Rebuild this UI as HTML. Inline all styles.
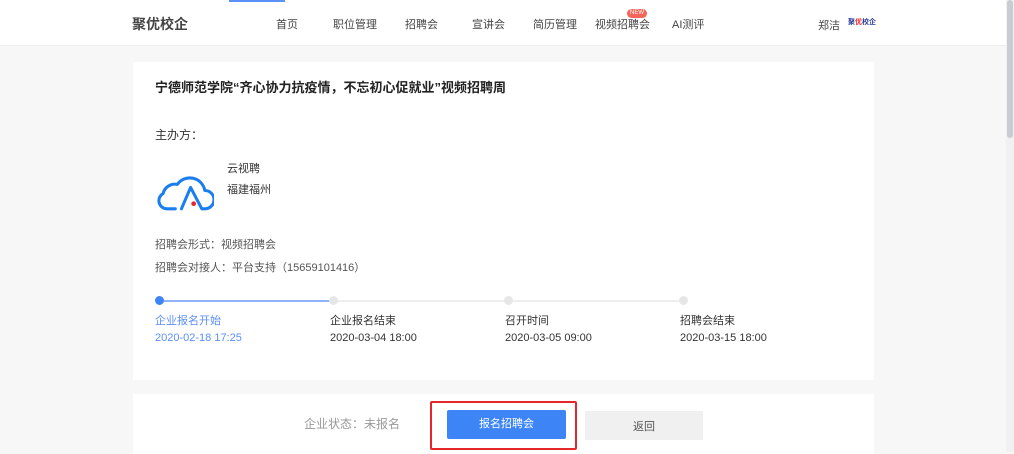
<!DOCTYPE html>
<html><head><meta charset="utf-8">
<style>
*{margin:0;padding:0;box-sizing:border-box}
body{width:1014px;height:452px;overflow:hidden;background:#f7f7f7;font-family:"Liberation Sans","Noto Sans CJK SC",sans-serif;position:relative;color:#333}
.hdr{position:absolute;left:0;top:0;width:1006px;height:46px;background:#fff;border-bottom:1px solid #eee}
.logo{position:absolute;left:132px;top:14px;font-size:14px;color:#444;font-weight:bold}
.nav{position:absolute;top:16px;font-size:11px;color:#444}
.bar{position:absolute;left:229px;top:0;width:56px;height:2px;background:#5b8ff9}
.new{position:absolute;left:627px;top:9px;background:#f4655a;color:#fff;font-size:6px;border-radius:5px;padding:0 3px;line-height:9px}
.sb{position:absolute;left:1006px;top:0;width:8px;height:452px;background:#f1f1f1}
.sb i{position:absolute;left:1px;top:0;width:6px;height:138px;background:#c9ccd3;border-radius:3px}
.card{position:absolute;left:133px;top:62px;width:741px;height:318px;background:#fff}
.card2{position:absolute;left:133px;top:394px;width:741px;height:60px;background:#fff}
.t{position:absolute;font-size:11px;color:#333;white-space:nowrap;line-height:14px}
.g{color:#555}
.btn{position:absolute;left:447px;top:410px;width:119px;height:29px;background:#3d84f7;border-radius:2px;color:#fff;font-size:11px;text-align:center;line-height:29px}
.btn2{position:absolute;left:585px;top:411px;width:118px;height:29px;background:#f0f0f0;color:#555;font-size:11px;text-align:center;line-height:32px}
.red{position:absolute;left:430px;top:401px;width:147px;height:49px;border:2px solid #e6262b;border-radius:2px}
.line{position:absolute;top:300px;height:2px}
.dot{position:absolute;top:296px;width:9px;height:9px;border-radius:50%;background:#e6e6e6}
</style></head><body>
<div class="hdr">
<div class="bar"></div>
<div class="logo">聚优校企</div>
<div class="nav" style="left:276px">首页</div>
<div class="nav" style="left:333px">职位管理</div>
<div class="nav" style="left:405px">招聘会</div>
<div class="nav" style="left:472px">宣讲会</div>
<div class="nav" style="left:533px">简历管理</div>
<div class="nav" style="left:595px">视频招聘会</div>
<div class="new">NEW</div>
<div class="nav" style="left:672px">AI测评</div>
<div class="nav" style="left:818px;top:17px">郑洁</div>
<div style="position:absolute;left:848px;top:17px;font-size:7px;font-weight:bold;color:#2a3b9a">聚<span style="color:#e22">优</span>校企</div>
</div>
<div class="sb"><i></i></div>
<div class="card"></div>
<div class="t" style="left:155px;top:80px;font-size:13px;font-weight:bold;color:#222;line-height:16px">宁德师范学院“齐心协力抗疫情，不忘初心促就业”视频招聘周</div>
<div class="t" style="left:155px;top:128px;font-size:12px">主办方：</div>
<svg style="position:absolute;left:157px;top:170px" width="57" height="43" viewBox="0 0 56 42">
<path d="M18 38 H10 A8 8 0 0 1 6 23 A12 12 0 0 1 20 14 A15 15 0 0 1 47 20 A9 9 0 0 1 47 38 L44 38 L33 17 L24 38" fill="none" stroke="#1a7ef0" stroke-width="3" stroke-linejoin="round" stroke-linecap="round"/>
<circle cx="36" cy="33" r="2.3" fill="#e6262b"/>
</svg>
<div class="t" style="left:227px;top:162px">云视聘</div>
<div class="t" style="left:227px;top:183px">福建福州</div>
<div class="t g" style="left:155px;top:238px">招聘会形式：视频招聘会</div>
<div class="t g" style="left:155px;top:261px">招聘会对接人：平台支持（15659101416）</div>
<div class="line" style="left:159px;width:175px;background:#8fb4fb"></div>
<div class="line" style="left:334px;width:350px;background:#eee"></div>
<div class="dot" style="left:155px;background:#3d84f7"></div>
<div class="dot" style="left:329px"></div>
<div class="dot" style="left:504px"></div>
<div class="dot" style="left:679px"></div>
<div class="t" style="left:155px;top:314px;color:#5b8ff9">企业报名开始</div>
<div class="t" style="left:155px;top:331px;color:#5b8ff9">2020-02-18 17:25</div>
<div class="t" style="left:330px;top:314px">企业报名结束</div>
<div class="t" style="left:330px;top:331px">2020-03-04 18:00</div>
<div class="t" style="left:505px;top:314px">召开时间</div>
<div class="t" style="left:505px;top:331px">2020-03-05 09:00</div>
<div class="t" style="left:680px;top:314px">招聘会结束</div>
<div class="t" style="left:680px;top:331px">2020-03-15 18:00</div>
<div class="card2"></div>
<div class="t" style="left:304px;top:417px;font-size:12px;color:#999">企业状态：未报名</div>
<div class="btn">报名招聘会</div>
<div class="btn2">返回</div>
<div class="red"></div>
</body></html>
